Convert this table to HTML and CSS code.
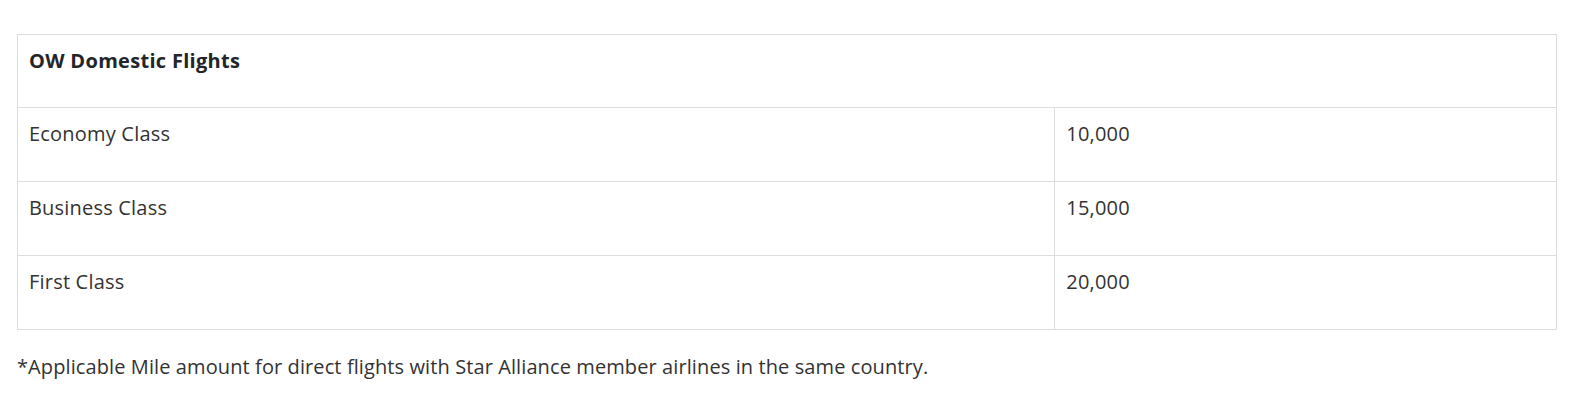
FILE: index.html
```html
<!DOCTYPE html>
<html>
<head>
<meta charset="utf-8">
<link rel="stylesheet" href="styles.css">
</head>
<body>
<div class="wrap">
  <table class="miles">
    <thead>
      <tr><th colspan="2"><p>OW Domestic Flights</p></th></tr>
    </thead>
    <tbody>
      <tr><td class="c1"><p>Economy Class</p></td><td><p>10,000</p></td></tr>
      <tr><td class="c1"><p>Business Class</p></td><td><p>15,000</p></td></tr>
      <tr><td class="c1"><p>First Class</p></td><td><p>20,000</p></td></tr>
    </tbody>
  </table>
  <p class="note">*Applicable Mile amount for direct flights with Star Alliance member airlines in the same country.</p>
</div>
</body>
</html>
```
FILE: styles.css
```css
html, body { margin: 0; padding: 0; background: #fff; }
body { font-family: "Open Sans", Lato, sans-serif; color: #333; }
.wrap { padding: 34px 17px 0 17px; }
.miles { width: 100%; border-collapse: collapse; border: 1px solid #ddd; }
.miles th, .miles td { border: 1px solid #ddd; text-align: left; vertical-align: top; }
.miles th { padding: 12px 11px 11px; font-weight: 700; font-size: 20px; color: #232529; letter-spacing: 0.3px; }
.miles td { padding: 12px 11px; font-size: 20px; color: #333; letter-spacing: 0.2px; }
.miles p { margin: 0 0 21px; line-height: 28px; }
.c1 { width: 67.4%; }
.note { margin: 23px 0 0; font-size: 20px; line-height: 28px; color: #333; letter-spacing: 0.1px; }
```
